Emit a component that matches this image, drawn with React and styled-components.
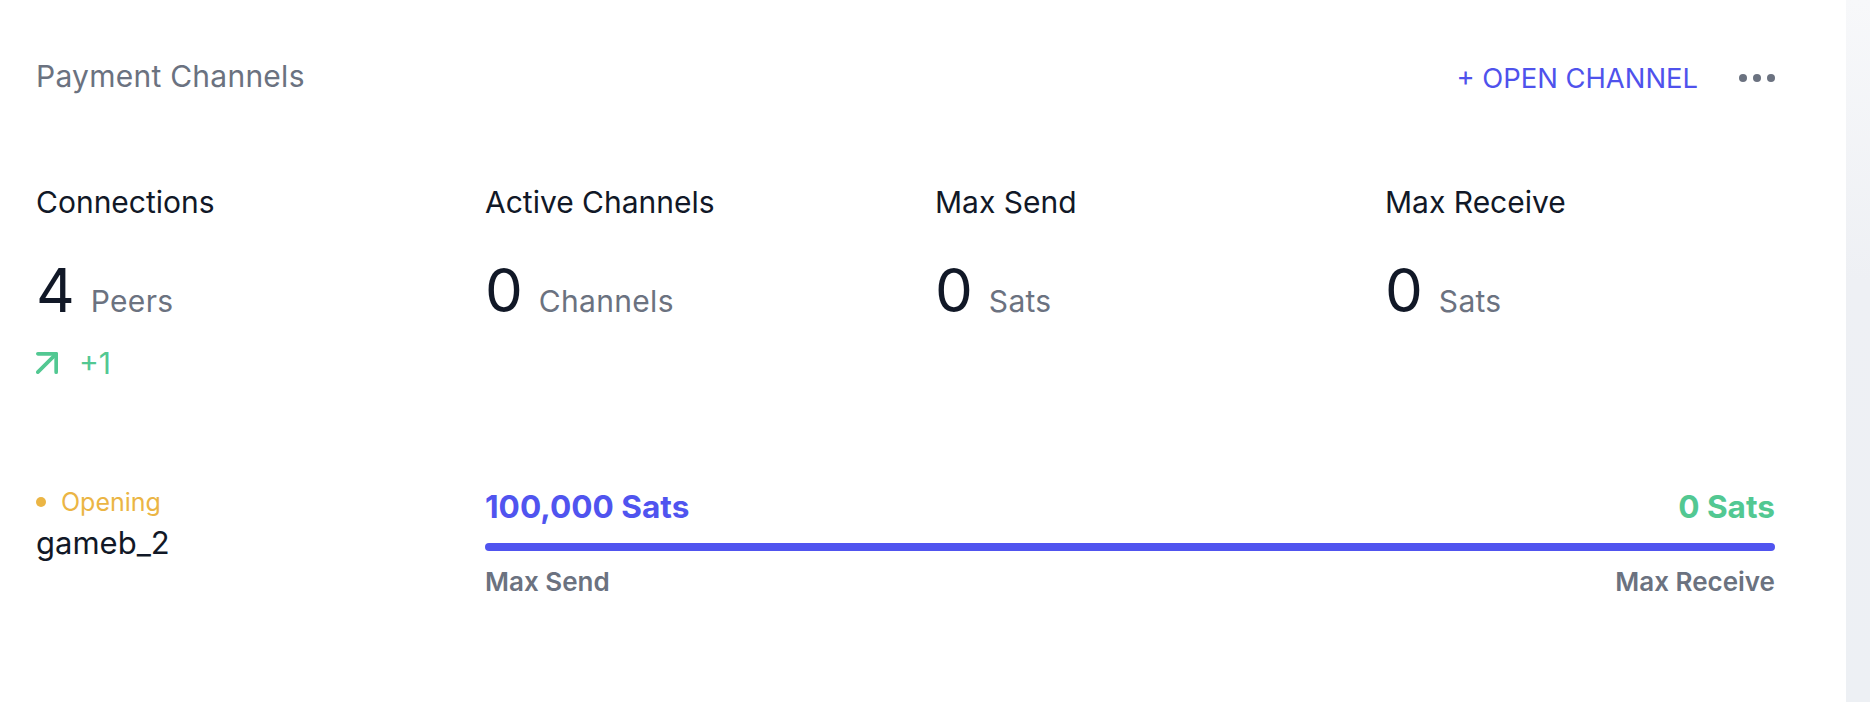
import styled, { createGlobalStyle } from "styled-components";

const GlobalStyle = createGlobalStyle`
  html, body {
    margin: 0;
    padding: 0;
    background: #ffffff;
  }
  body {
    font-family: Inter, "Noto Sans", "Liberation Sans", sans-serif;
    -webkit-font-smoothing: antialiased;
  }
`;

const Page = styled.div`
  display: flex;
  width: 1870px;
  height: 702px;
  overflow: hidden;
`;

const Card = styled.section`
  flex: 1;
  background: #ffffff;
  padding: 54px 71px 0 36px;
  box-sizing: border-box;
`;

const Gutter = styled.div`
  width: 24px;
  background: linear-gradient(180deg, #f7f8fa 0%, #eef0f4 40%, #edf0f4 100%);
`;

const Header = styled.header`
  display: flex;
  align-items: center;
  justify-content: space-between;
  height: 45px;
`;

const Title = styled.h2`
  margin: 0;
  font-size: 30px;
  font-weight: 400;
  line-height: 45px;
  letter-spacing: 0.25px;
  color: #6b7280;
`;

const Actions = styled.div`
  display: flex;
  align-items: center;
  gap: 41px;
  padding-top: 3px;
`;

const OpenButton = styled.button`
  border: 0;
  background: none;
  padding: 0;
  font-family: inherit;
  font-size: 27.4px;
  font-weight: 400;
  line-height: 40px;
  color: #4f52ec;
  cursor: pointer;
`;

const MoreButton = styled.button`
  display: flex;
  gap: 6px;
  border: 0;
  background: none;
  padding: 0;
  cursor: pointer;
`;

const Dot = styled.span`
  display: block;
  width: ${(p) => p.size || 8}px;
  height: ${(p) => p.size || 8}px;
  border-radius: 50%;
  background: ${(p) => p.color};
`;

const Stats = styled.div`
  display: grid;
  grid-template-columns: 449px 450px 450px 1fr;
  margin-top: 81px;
`;

const Stat = styled.div`
  display: flex;
  flex-direction: column;
`;

const StatLabel = styled.div`
  font-size: 30px;
  line-height: 45px;
  color: #111827;
`;

const StatValue = styled.div`
  display: flex;
  align-items: baseline;
  gap: 16px;
  margin-top: 35px;
`;

const Number = styled.span`
  font-size: 60px;
  line-height: 60px;
  color: #111827;
`;

const Unit = styled.span`
  font-size: 30px;
  letter-spacing: 0.3px;
  color: #6b7280;
`;

const Trend = styled.div`
  display: flex;
  align-items: center;
  gap: 21px;
  margin-top: 22px;
  font-size: 30px;
  line-height: 42px;
  color: #52c892;
`;

const ChannelRow = styled.div`
  display: grid;
  grid-template-columns: 449px 1fr;
  margin-top: 100px;
`;

const Status = styled.div`
  display: flex;
  align-items: center;
  gap: 15px;
  font-size: 25px;
  line-height: 36px;
  color: #ebb544;
`;

const PeerName = styled.div`
  font-size: 31px;
  line-height: 45px;
  color: #111827;
`;

const Amounts = styled.div`
  display: flex;
  justify-content: space-between;
  font-size: 31.6px;
  font-weight: 700;
  line-height: 45px;
`;

const Amount = styled.span`
  color: ${(p) => p.color};
`;

const Bar = styled.div`
  height: 8px;
  margin-top: 14px;
  border-radius: 4px;
  background: #5054ef;
`;

const BarLabels = styled.div`
  display: flex;
  justify-content: space-between;
  margin-top: 13px;
  font-size: 26px;
  font-weight: 600;
  line-height: 36px;
  color: #6b7280;
`;

const ArrowUpRight = () => (
  <svg
    width="22"
    height="22"
    viewBox="6 6 12 12"
    fill="none"
    stroke="currentColor"
    strokeWidth="2"
    strokeLinecap="round"
    strokeLinejoin="round"
  >
    <path d="M7 17 17 7" />
    <path d="M7 7h10v10" />
  </svg>
);

const stats = [
  { label: "Connections", value: 4, unit: "Peers", trend: "+1" },
  { label: "Active Channels", value: 0, unit: "Channels" },
  { label: "Max Send", value: 0, unit: "Sats" },
  { label: "Max Receive", value: 0, unit: "Sats" },
];

export default function App() {
  return (
    <>
      <GlobalStyle />
      <Page>
        <Card>
          <Header>
            <Title>Payment Channels</Title>
            <Actions>
              <OpenButton>+ OPEN CHANNEL</OpenButton>
              <MoreButton aria-label="More">
                <Dot color="#6b7280" />
                <Dot color="#6b7280" />
                <Dot color="#6b7280" />
              </MoreButton>
            </Actions>
          </Header>

          <Stats>
            {stats.map((s) => (
              <Stat key={s.label}>
                <StatLabel>{s.label}</StatLabel>
                <StatValue>
                  <Number>{s.value}</Number>
                  <Unit>{s.unit}</Unit>
                </StatValue>
                {s.trend && (
                  <Trend>
                    <ArrowUpRight />
                    {s.trend}
                  </Trend>
                )}
              </Stat>
            ))}
          </Stats>

          <ChannelRow>
            <div>
              <Status>
                <Dot size={10} color="#ebb544" />
                Opening
              </Status>
              <PeerName>gameb_2</PeerName>
            </div>
            <div>
              <Amounts>
                <Amount color="#5054ef">100,000 Sats</Amount>
                <Amount color="#52c892">0 Sats</Amount>
              </Amounts>
              <Bar />
              <BarLabels>
                <span>Max Send</span>
                <span>Max Receive</span>
              </BarLabels>
            </div>
          </ChannelRow>
        </Card>
        <Gutter />
      </Page>
    </>
  );
}
